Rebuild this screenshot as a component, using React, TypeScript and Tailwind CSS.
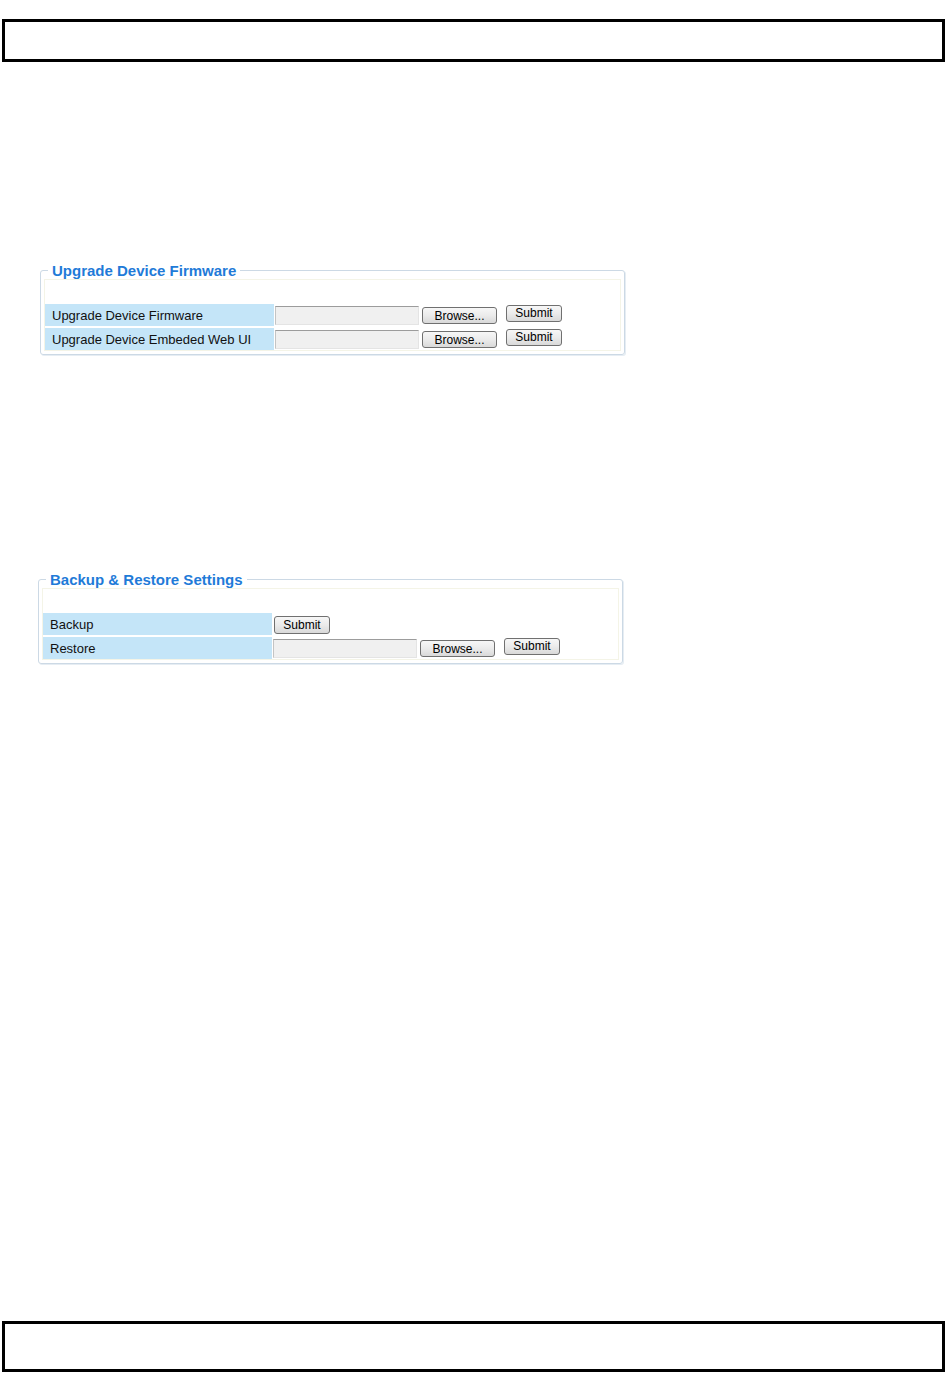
import React from 'react';

type Row = {
  label: string;
  file?: boolean;
};

const upgradeRows: Row[] = [
  { label: 'Upgrade Device Firmware', file: true },
  { label: 'Upgrade Device Embeded Web UI', file: true },
];

const backupRows: Row[] = [
  { label: 'Backup' },
  { label: 'Restore', file: true },
];

function Button({ children, className = '' }: { children: React.ReactNode; className?: string }) {
  return (
    <button
      type="button"
      className={`h-[17px] border border-[#707070] rounded-[3px] bg-linear-to-b from-[#f7f7f7] via-[#ebebeb] to-[#d9d9d9] text-[12px] leading-[15px] text-black flex items-center justify-center ${className}`}
    >
      {children}
    </button>
  );
}

function FieldRow({ row }: { row: Row }) {
  return (
    <div className="flex h-[22px]">
      <div className="w-[229px] h-full bg-[#c4e5f8] pl-[7px] text-[13px] leading-[23px] text-[#111]">
        {row.label}
      </div>
      {row.file ? (
        <div className="flex items-start">
          <input
            type="text"
            readOnly
            className="ml-[1px] mt-[2px] w-[144px] h-[19px] bg-[#f0f0f0] border border-t-[#9c9c9c] border-l-[#c4c4c4] border-r-[#e4e4e4] border-b-[#e4e4e4] outline-none"
          />
          <Button className="ml-[3px] mt-[3px] w-[75px] pt-[1px]">Browse...</Button>
          <Button className="ml-[9px] mt-[1px] w-[56px]">Submit</Button>
        </div>
      ) : (
        <Button className="ml-[2px] mt-[3px] w-[56px] h-[18px]">Submit</Button>
      )}
    </div>
  );
}

function Section({ title, rows, className = '' }: { title: string; rows: Row[]; className?: string }) {
  return (
    <fieldset className={`w-[585px] border border-[#ccd9e5] rounded-[3px] px-[3px] pb-[3px] shadow-[1px_1px_0_#e6edf3] ${className}`}>
      <legend className="ml-[4px] px-[4px] text-[15px] leading-[17px] font-bold text-[#1f7bd8]">{title}</legend>
      <div className="border border-[#f4f4e7] pt-[24px] flex flex-col gap-[2px]">
        {rows.map((row) => (
          <FieldRow key={row.label} row={row} />
        ))}
      </div>
    </fieldset>
  );
}

export default function App() {
  return (
    <div className="w-[950px] h-[1387px] bg-white flex flex-col font-['Liberation_Sans',Arial,sans-serif]">
      {/* page header frame */}
      <div className="mt-[19px] ml-[2px] w-[943px] h-[43px] border-[3px] border-black" />

      <Section title="Upgrade Device Firmware" rows={upgradeRows} className="mt-[200px] ml-[40px]" />

      <Section title="Backup & Restore Settings" rows={backupRows} className="mt-[216px] ml-[38px]" />

      {/* page footer frame */}
      <div className="mt-auto mb-[15px] ml-[2px] w-[943px] h-[51px] border-[3px] border-black" />
    </div>
  );
}
